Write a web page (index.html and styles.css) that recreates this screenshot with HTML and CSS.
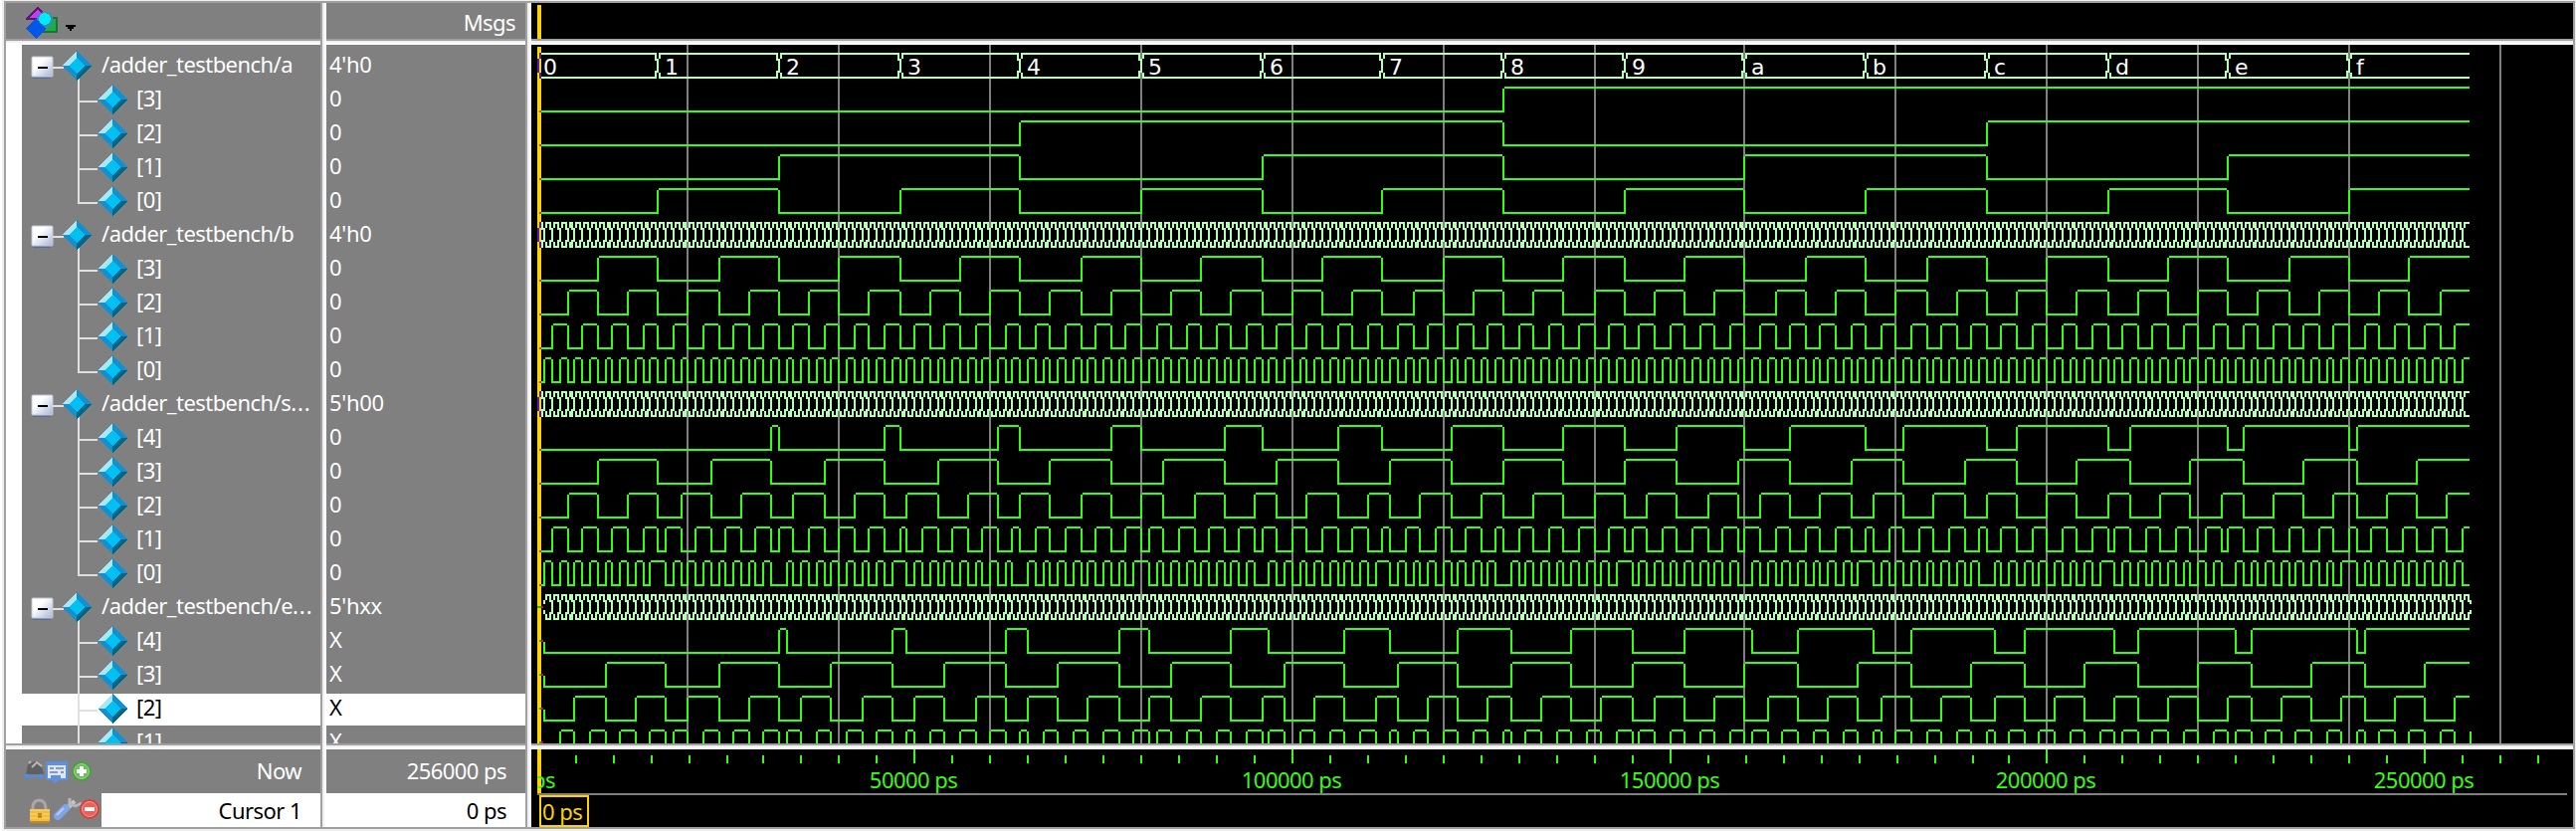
FILE: index.html
```html
<!DOCTYPE html>
<html lang="en">
<head>
<meta charset="utf-8">
<title>Wave</title>
<link rel="stylesheet" href="styles.css">
</head>
<body>
<svg class="defs" width="0" height="0">
  <symbol id="gem" viewBox="0 0 30 30" shape-rendering="crispEdges">
    <path d="M15 0L0 15H15z" fill="#a8e6f8"/>
    <path d="M15 0L30 15H15z" fill="#1191d0"/>
    <path d="M0 15H15V30z" fill="#1191d0"/>
    <path d="M30 15H15V30z" fill="#006688"/>
    <path d="M15 7L23 15L15 23L7 15z" fill="#00c0f4"/>
  </symbol>
</svg>
<main class="wave">
  <div class="pane tools">
    <svg class="tool-icon" viewBox="0 0 52 32" width="52" height="32" shape-rendering="crispEdges">
      <path d="M12 1L23 12H1z" fill="#c63af0" stroke="#5c1478" stroke-width="2"/>
      <path d="M17 11H31V25H17z" fill="#18b040" stroke="#207038" stroke-width="2"/>
      <circle cx="19" cy="13" r="8" fill="#4688a8"/><circle cx="19" cy="12" r="6" fill="#00eaff"/>
      <path d="M10 11L20 22L10 32L0 22z" fill="#0456e8"/>
      <path d="M40 18H50V20H48V22H46V24H44V22H42V20H40z" fill="#000"/>
    </svg>
  </div>
  <div class="vs"></div>
  <div class="pane msgs">Msgs</div>
  <div class="vs"></div>
  <div class="pane black"><div class="cursor-top"></div></div>

  <div class="hs"></div><div class="vs"></div><div class="hs"></div><div class="vs"></div><div class="hs"></div>

  <div class="pane names" id="names"></div>
  <div class="vs"></div>
  <div class="pane values" id="values"></div>
  <div class="vs"></div>
  <div class="pane black"><svg id="plot" viewBox="534 45 2052 702" width="2052" height="702"></svg></div>

  <div class="hs"></div><div class="vs"></div><div class="hs"></div><div class="vs"></div><div class="hs"></div>

  <div class="pane foot">
    <div class="foot-row now">
      <svg class="icons" width="96" height="44" viewBox="6 753 96 44">
        <path d="M26 778L28 768L35 765L42 771L44 778z" fill="#606060"/>
        <path d="M29 767L31 765M32 771L37 766L42 770" stroke="#b8b8b8" stroke-width="2" fill="none"/>
        <path d="M25 780H43M28 778L25 780L28 782M40 778L43 780L40 782" stroke="#4a8ef0" stroke-width="2" fill="none"/>
        <rect x="46" y="765" width="22" height="19" rx="2" fill="#5f90e0"/><rect x="48" y="769" width="18" height="13" fill="#dce6f4"/>
        <path d="M50 772H54M56 772H64M50 776H58M61 776H64" stroke="#8a9ab4" stroke-width="2"/><path d="M51 779H61V783L55 787L51 783z" fill="#5f90e0"/>
        <circle cx="82" cy="775" r="10" fill="#48a040"/><circle cx="82" cy="775" r="7.5" fill="#6cc05c" stroke="#9bd88e"/>
        <path d="M82 770V780M77 775H87" stroke="#fff" stroke-width="4"/>
      </svg>
      <span>Now</span>
    </div>
    <div class="foot-row cur">
      <svg class="icons" width="96" height="34" viewBox="6 797 96 34">
        <path d="M33 813V810Q34 804 40 804Q46 805 46 813" fill="none" stroke="#a8a8a8" stroke-width="3"/>
        <rect x="30" y="813" width="20" height="14" fill="#f4bc3c"/><path d="M30 814H50M30 818H50M30 822H50" stroke="#f9d778" stroke-width="1"/><path d="M30 826H50" stroke="#c88820" stroke-width="2"/><rect x="38" y="817" width="4" height="5" fill="#c88820"/>
        <path d="M68 812L75 805" stroke="#c4c8cc" stroke-width="4"/><path d="M70 802V808L76 810L82 807" fill="none" stroke="#b4b8bc" stroke-width="3"/>
        <path d="M58 820L66 812" stroke="#7fa4e8" stroke-width="8" stroke-linecap="round"/><path d="M57 819L64 812" stroke="#b4ccf8" stroke-width="2"/>
        <circle cx="90" cy="813" r="10" fill="#d8403c"/><circle cx="90" cy="813" r="7.5" fill="#ec6058" stroke="#f8a098"/>
        <path d="M85 813H95" stroke="#fff" stroke-width="4"/>
      </svg>
      <span>Cursor 1</span>
    </div>
  </div>
  <div class="vs"></div>
  <div class="pane foot">
    <div class="foot-row now"><span>256000 ps</span></div>
    <div class="foot-row cur"><span>0 ps</span></div>
  </div>
  <div class="vs"></div>
  <div class="pane black"><svg id="ruler" viewBox="534 753 2052 78" width="2052" height="78"></svg></div>
</main>
<script src="wave.js"></script>
</body>
</html>
```

FILE: styles.css
```css
* { box-sizing: border-box; }
body {
  margin: 0;
  width: 2589px;
  height: 835px;
  overflow: hidden;
  background: linear-gradient(to right, #fff 2px, #f0f0f0 2px);
  font: 22px/34px "Noto Sans", "DejaVu Sans", sans-serif;
  letter-spacing: -0.55px;
  color: #fff;
}
.defs { position: absolute; }
.wave {
  width: 2584px;
  height: 832px;
  margin: 1px 0 0 4px;
  border: 2px solid #a0a0a0;
  display: grid;
  grid-template-columns: 316px 6px 200px 6px 2052px;
  grid-template-rows: 36px 6px 702px 6px 78px;
}
.pane { background: #808080; overflow: hidden; min-width: 0; min-height: 0; }
.pane.black { background: #000; }
.black svg { display: block; }
.vs { background: linear-gradient(to right, #a0a0a0 2px, #f0f0f0 2px 4px, #fff 4px); }
.hs { background: linear-gradient(#a0a0a0 2px, #f0f0f0 2px 4px, #fff 4px); }
.tools { padding: 4px 0 0 20px; }
.tool-icon { display: block; }
.msgs { text-align: right; padding: 2px 10px 0 0; }
.cursor-top { width: 4px; height: 34px; margin: 2px 0 0 6px; background: #ffd200; }
.names { padding-top: 6px; border-left: 16px solid #fff; }
.values { padding-top: 6px; }
.row { height: 34px; display: flex; white-space: pre; line-height: 26px; }
.row svg { flex: none; display: block; }
.row.picked { height: 32px; margin-bottom: 2px; background: #fff; color: #000; }
.values .row { padding-left: 3px; letter-spacing: -0.3px; }
.dots { letter-spacing: 0.9px; }
.foot-row { display: flex; justify-content: space-between; white-space: pre; }
.foot-row span { margin-left: auto; padding-right: 19px; }
.now { height: 44px; line-height: 43px; }
.cur { height: 34px; line-height: 35px; }
.cur span { background: #fff; color: #000; flex: 1; text-align: right; }
.icons { background: #808080; flex: none; }
.bus-label { font-family: "DejaVu Sans", sans-serif; font-size: 22px; letter-spacing: 0; fill: #fff; }
.time { fill: #33ff11; text-anchor: middle; }
.cursor-time { fill: #ffd200; }
```

FILE: wave.js
```js
const X0 = 269.95, STEP = 3.794, END = 256;
const GREEN = '#33ff11', BUS = '#b3ffb3', GOLD = '#ffd200';
const px = t => Math.floor(X0 + STEP * t);

// Rectangles are given in logical pixels; each one covers 2x2 device pixels.
const box = (x1, y1, x2, y2) => x2 > x1 ? `M${x1 * 2} ${y1 * 2 + 1}H${x2 * 2}V${y2 * 2 + 1}H${x1 * 2}z` : '';
const fill = (d, c) => `<path d="${d}" fill="${c}" shape-rendering="crispEdges"/>`;

const sigA = t => t >> 4, sigB = t => t & 15, sigS = t => (t >> 4) + (t & 15), sigE = t => sigS(t - 1);
const groups = [
  { name: '/adder_testbench/a', value: "4'h0", bits: 4, f: sigA, start: 0 },
  { name: '/adder_testbench/b', value: "4'h0", bits: 4, f: sigB, start: 0 },
  { name: '/adder_testbench/s<span class="dots">...</span>', value: "5'h00", bits: 5, f: sigS, start: 0 },
  { name: '/adder_testbench/e<span class="dots">...</span>', value: "5'hxx", bits: 5, f: sigE, start: 1 }
];

function bit(f, n, start, top) {
  const low = top + 12, mid = top + 6;
  let d = '', extra = '', level = (f(start) >> n) & 1;
  let x = start ? px(1) : 272;
  if (start) {
    d += box(x, mid + 1, x + 1, low + 1);
    extra = fill(box(271, mid, 272, mid + 1), '#00c800') + fill(box(272, mid, 273, mid + 1), '#f00000');
  } else {
    extra = fill(box(271, low, 272, low + 1), '#d23c1e');
  }
  for (let t = start + 1; t <= END; t++) {
    const v = t === END && !start ? level : (f(t) >> n) & 1;
    const e = px(t);
    if (v !== level || t === END) {
      d += level ? box(x + 1, top, e, top + 1) : box(x, low, e, low + 1);
      if (v !== level) d += box(e, top + 1, e + 1, low + 1);
      x = e;
      level = v;
    }
  }
  return fill(d, GREEN) + extra;
}

function bus(g, top) {
  const edges = g.start ? [px(g.start)] : [];
  for (let t = g.start + 1; t < END; t++) if (g.f(t) !== g.f(t - 1) || g.start) edges.push(px(t));
  if (g.start) edges.push(px(END));
  let d = '', extra = '', x = 271;
  const left = e => box(e - 1, top, e, top + 4) + box(e - 1, top + 9, e, top + 13);
  const right = e => box(e + 1, top, e + 2, top + 3) + box(e + 1, top + 10, e + 2, top + 13);
  edges.forEach((e, i) => {
    const opening = g.start && i === 0, closing = g.start && i === edges.length - 1;
    if (!opening) d += box(x + 1, top, e, top + 1) + box(x + 1, top + 12, e, top + 13) + left(e);
    if (!closing) d += right(e);
    d += opening || closing
      ? box(e, top + 3, e + 1, top + 5) + box(e, top + 8, e + 1, top + 10)
      : box(e, top + 3, e + 1, top + 10);
    x = e;
  });
  if (!g.start) {
    d += box(x + 1, top, px(END), top + 1) + box(x + 1, top + 12, px(END), top + 13);
    extra = fill(box(270, top + 3, 271, top + 10) + box(271, top, 272, top + 3) + box(271, top + 10, 272, top + 13), '#4a20b4');
  } else {
    extra = fill(box(270, top + 6, 272, top + 7), '#00c800') + fill(box(272, top + 6, 273, top + 7), '#f00000');
  }
  return fill(d, BUS) + extra;
}

let names = '', values = '', grid = '', waves = '', row = 0;
const line = '#e0e0e0';
groups.forEach(g => {
  names += `<div class="row"><svg width="80" height="34" viewBox="22 0 80 34">
    <defs><linearGradient id="knob" x2="1" y2="1"><stop offset=".35" stop-color="#fff"/><stop offset="1" stop-color="#a8b4d4"/></linearGradient></defs>
    <rect x="33" y="25" width="18" height="3" fill="#5c6c90"/><rect x="32" y="6" width="21" height="20" rx="1" fill="url(#knob)" stroke="#c0c8dc" stroke-width="1"/>
    <path d="M38 17H48" stroke="#000" stroke-width="2"/><path d="M53 17H64M79 28V34" stroke="${line}" stroke-width="2"/>
    <use href="#gem" x="62" y="0" width="30" height="30"/></svg><span>${g.name}</span></div>`;
  values += `<div class="row">${g.value}</div>`;
  waves += bus(g, 26 + 17 * row);
  if (row === 0) {
    for (let v = 0; v < 16; v++)
      waves += `<text class="bus-label" x="${px(v * 16) * 2 + 8}" y="75">${v.toString(16)}</text>`;
  }
  row++;
  for (let n = g.bits - 1; n >= 0; n--) {
    if (row > 20) break;
    const picked = row === 19 ? ' picked' : '';
    names += `<div class="row${picked}"><svg width="115" height="34" viewBox="22 0 115 34">
      <path d="M79 0V${n ? 34 : 18}M79 17H98" fill="none" stroke="${line}" stroke-width="2"/>
      <use href="#gem" x="98" y="0" width="30" height="30"/></svg>[${n}]</div>`;
    values += `<div class="row${picked}">${g.start ? 'X' : '0'}</div>`;
    waves += bit(g.f, n, g.start, 26 + 17 * row);
    row++;
  }
});
document.getElementById('names').innerHTML = names;
document.getElementById('values').innerHTML = values;

for (let t = 20; t <= 260; t += 20) grid += `M${px(t) * 2} 45h2v702h-2z`;
document.getElementById('plot').innerHTML =
  fill(grid, '#808080') + fill('M540 47h4v700h-4z', GOLD) + waves;

let ticks = '', labels = '';
for (let t = 5; t <= 265; t += 5) {
  const x = Math.floor(270.15 + STEP * t) * 2, major = t % 50 === 0;
  ticks += `M${x} ${major ? 753 : 759}h2V767h-2z`;
  if (major) labels += `<text class="time" x="${x}" y="792">${t * 1000} ps</text>`;
}
document.getElementById('ruler').innerHTML =
  `<defs><clipPath id="edge"><path d="M540 753H2586V831H540z"/></clipPath></defs>` +
  fill(ticks, GREEN) + labels +
  fill('M540 753h4v44h-4z', GOLD) + `<text class="time" x="538" y="792" clip-path="url(#edge)">0 ps</text>` +
  fill('M540 797H2580v2H540z', '#808080') +
  `<rect x="543" y="800" width="48" height="30" fill="none" stroke="${GOLD}" stroke-width="2"/>` +
  `<text class="cursor-time" x="545" y="824">0 ps</text>`;
```
